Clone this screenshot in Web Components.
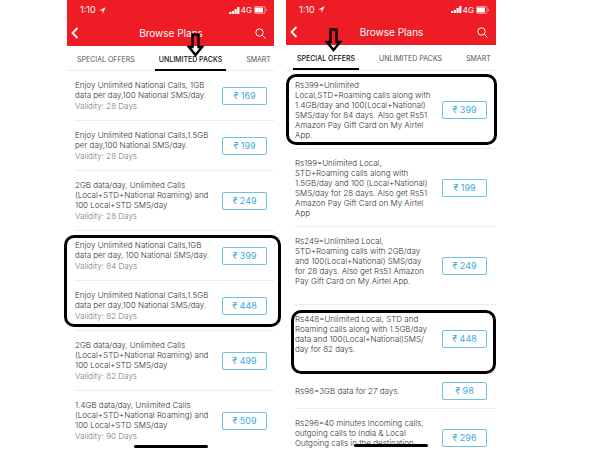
<!DOCTYPE html>
<html lang="en">
<head>
<meta charset="utf-8">
<title>Browse Plans</title>
<style>
  body {
    margin: 0;
    height: 100vh;
    overflow: hidden;
    background: #fff;
    font-family: Inter, "Liberation Sans", sans-serif;
  }
  main {
    display: grid;
    grid-template-columns: 207fr 210fr;
    grid-template-rows: 100%;
    gap: 12px;
    height: 100%;
    padding: 0 102px 0 67px;
    box-sizing: border-box;
  }
  .first { --status: 20px; --tabs: 25px; --gutter: 8px; --edge: 7px; --home: 2px; --arrow: 12px; }
  .second { --status: 19px; --tabs: 26px; --gutter: 9px; --edge: 9px; --home: 3px; --arrow: 16px; }
</style>
</head>
<body>
<main>
  <phone-screen class="first">
    <plan-tabs slot="tabs" tabs='["SPECIAL OFFERS","UNLIMITED PACKS","SMART"]' active="1"></plan-tabs>
    <plan-row price="169" validity="28">Enjoy Unlimited National Calls, 1GB<br>data per day,100 National SMS/day.</plan-row>
    <plan-row price="199" validity="28">Enjoy Unlimited National Calls,1.5GB<br>per day,100 National SMS/day.</plan-row>
    <plan-row price="249" validity="28">2GB data/day, Unlimited Calls<br>(Local+STD+National Roaming) and<br>100 Local+STD SMS/day</plan-row>
    <marked-group style="--ring: 4px -7px 4px -3px">
      <plan-row price="399" validity="84">Enjoy Unlimited National Calls,1GB<br>data per day, 100 National SMS/day.</plan-row>
      <plan-row price="448" validity="82">Enjoy Unlimited National Calls,1.5GB<br>data per day,100 National SMS/day.</plan-row>
    </marked-group>
    <plan-row price="499" validity="82">2GB data/day, Unlimited Calls<br>(Local+STD+National Roaming) and<br>100 Local+STD SMS/day</plan-row>
    <plan-row price="509" validity="90">1.4GB data/day, Unlimited Calls<br>(Local+STD+National Roaming) and<br>100 Local+STD SMS/day</plan-row>
  </phone-screen>

  <phone-screen class="second">
    <plan-tabs slot="tabs" tabs='["SPECIAL OFFERS","UNLIMITED PACKS","SMART"]' active="0"></plan-tabs>
    <marked-group style="--ring: 3px -1px 4px 0px">
      <plan-row price="399" lines="6">Rs399=Unlimited<br>Local,STD+Roaming calls along with<br>1.4GB/day and 100(Local+National)<br>SMS/day for 84 days. Also get Rs51<br>Amazon Pay Gift Card on My Airtel<br>App.</plan-row>
    </marked-group>
    <plan-row price="199" lines="6">Rs199=Unlimited Local,<br>STD+Roaming calls along with<br>1.5GB/day and 100 (Local+National)<br>SMS/day for 28 days. Also get Rs51<br>Amazon Pay Gift Card on My Airtel<br>App</plan-row>
    <plan-row price="249" lines="6">Rs249=Unlimited Local,<br>STD+Roaming calls with 2GB/day<br>and 100(Local+National) SMS/day<br>for 28 days. Also get Rs51 Amazon<br>Pay Gift Card on My Airtel App.</plan-row>
    <marked-group style="--ring: 5px 0px -1px 5px">
      <plan-row price="448" lines="5">Rs448=Unlimited Local, STD and<br>Roaming calls along with 1.5GB/day<br>data and 100(Local+National)SMS/<br>day for 82 days.</plan-row>
    </marked-group>
    <plan-row price="98">Rs98=3GB data for 27 days.</plan-row>
    <plan-row price="296" lines="4">Rs296=40 minutes Incoming calls,<br>outgoing calls to India &amp; Local<br>Outgoing calls in the destination</plan-row>
  </phone-screen>
</main>

<script>
// One phone: status bar, title bar, tabs, list of plans, home indicator
class PhoneScreen extends HTMLElement {
  constructor() {
    super();
    this.attachShadow({ mode: "open" });
  }

  connectedCallback() {
    this.shadowRoot.innerHTML = `
      <style>
        :host { display: block; position: relative; min-width: 0; height: 100%; }
        header { background: #ee1c25; color: #fff; }
        .status { display: flex; align-items: center; height: var(--status); padding: 0 7px 0 13px; font-size: 9px; line-height: 12px; }
        .status .loc { margin-left: 3px; flex: 1; display: flex; }
        .status .net { margin: 0 2px 0 1px; font-size: 8px; }
        svg { display: block; fill: none; stroke: currentColor; }
        .bar { display: grid; grid-template-columns: 16px 1fr 12px; align-items: center; height: 26px; padding: 0 7px 0 4px; }
        h1 { margin: 0; font-size: 10px; line-height: 14px; font-weight: 400; text-align: center; white-space: nowrap; }
        button { margin: 0; padding: 0; border: 0; background: none; color: inherit; display: flex; }
        .home { position: absolute; bottom: var(--home); left: 50%; width: 74px; height: 3px; margin-left: -37px; border-radius: 2px; background: #000; }
      </style>
      <header>
        <div class="status">
          <span>1:10</span>
          <span class="loc"><svg width="7" height="7" viewBox="0 0 7 7"><path d="M0 3.6 6.6.3 3.6 7V3.6Z" fill="currentColor" stroke="none"/></svg></span>
          <svg width="11" height="7" viewBox="0 0 11 7"><path d="M1.2 7V5M3.9 7V4M6.6 7V2M9.3 7V0" stroke-width="2.2"/></svg>
          <span class="net">4G</span>
          <svg width="13" height="8" viewBox="0 0 13 8"><rect x=".5" y=".5" width="10.5" height="7" rx="1.5" stroke-opacity=".5"/><rect x="1" y="1.5" width="8" height="5" fill="currentColor" stroke="none"/><path d="M12.3 3v2" stroke-opacity=".5"/></svg>
        </div>
        <div class="bar">
          <button aria-label="Back"><svg width="8" height="12" viewBox="0 0 8 12"><path d="M6.5 1 1.5 6l5 5" stroke-width="1.8"/></svg></button>
          <h1>Browse Plans</h1>
          <button aria-label="Search"><svg width="11" height="11" viewBox="0 0 11 11"><circle cx="4.5" cy="4.5" r="3.7"/><path d="m7.3 7.3 3.2 3.2"/></svg></button>
        </div>
      </header>
      <slot name="tabs"></slot>
      <slot></slot>
      <div class="home"></div>
    `;
  }
}

class PlanTabs extends HTMLElement {
  constructor() {
    super();
    this.attachShadow({ mode: "open" });
  }

  connectedCallback() {
    const active = Number(this.getAttribute("active"));
    this.shadowRoot.innerHTML = `
      <style>
        :host { display: block; height: var(--tabs); box-sizing: border-box; border-bottom: 1px solid #ececec; }
        .tabs { display: flex; gap: 16px; height: 25px; padding-left: calc(var(--gutter) - 2px); }
        button { position: relative; flex: none; margin: 0; padding: 4px 4px 0; border: 0; border-bottom: 2px solid transparent; background: none; font: 400 7px/12px Inter, sans-serif; color: #555; white-space: nowrap; }
        button[aria-selected="true"] { border-bottom-color: #000; color: #111; font-weight: 500; }
        /* hand-drawn pointer above the chosen tab */
        .arrow { position: absolute; left: 32px; bottom: var(--arrow); display: block; }
      </style>
      <div class="tabs" role="tablist">
        ${JSON.parse(this.getAttribute("tabs") || "[]")
          .map(
            (tab, i) => `
            <button role="tab" aria-selected="${i === active}">${tab}${
              i === active
                ? `<svg class="arrow" width="17" height="24" viewBox="0 0 17 24"><path d="M5.5 1.5h6V13h-6Z" fill="#ee1c25"/><path d="M5.5 1.5h6V14H15l-6.5 8L2 14h3.5Z" fill="none" stroke="#000" stroke-width="2.4"/></svg>`
                : ""
            }</button>`
          )
          .join("")}
      </div>
    `;
  }
}

class PlanRow extends HTMLElement {
  constructor() {
    super();
    this.attachShadow({ mode: "open" });
  }

  connectedCallback() {
    const validity = this.getAttribute("validity");
    const lines = this.getAttribute("lines") || 1;
    this.shadowRoot.innerHTML = `
      <style>
        :host { display: flex; align-items: center; justify-content: space-between; margin-left: var(--gutter); padding: 9px var(--edge) 8px 0; border-bottom: 1px solid #ececec; font-size: 8px; line-height: 10px; font-weight: 300; color: #333; }
        .text { min-height: ${lines * 10}px; white-space: nowrap; }
        p { margin: 0; }
        .validity { line-height: 12px; color: #777; }
        button { flex: none; width: 45px; height: 18px; margin: 0; padding: 0; border: 1px solid #6fc0e6; border-radius: 2px; background: #fff; font: 400 9px/12px Inter, "DejaVu Sans", sans-serif; color: #3fa9dc; }
      </style>
      <div class="text">
        <p><slot></slot></p>
        ${validity ? `<p class="validity">Validity: ${validity} Days</p>` : ""}
      </div>
      <button>₹ ${this.getAttribute("price")}</button>
    `;
  }
}

// Black marker outline drawn round the plans inside
class MarkedGroup extends HTMLElement {
  constructor() {
    super();
    this.attachShadow({ mode: "open" });
  }

  connectedCallback() {
    this.shadowRoot.innerHTML = `
      <style>
        :host { display: block; position: relative; }
        .ring { position: absolute; inset: var(--ring); border: 3px solid #000; border-radius: 10px; pointer-events: none; }
      </style>
      <slot></slot>
      <div class="ring"></div>
    `;
  }
}

customElements.define("phone-screen", PhoneScreen);
customElements.define("plan-tabs", PlanTabs);
customElements.define("plan-row", PlanRow);
customElements.define("marked-group", MarkedGroup);
</script>
</body>
</html>
